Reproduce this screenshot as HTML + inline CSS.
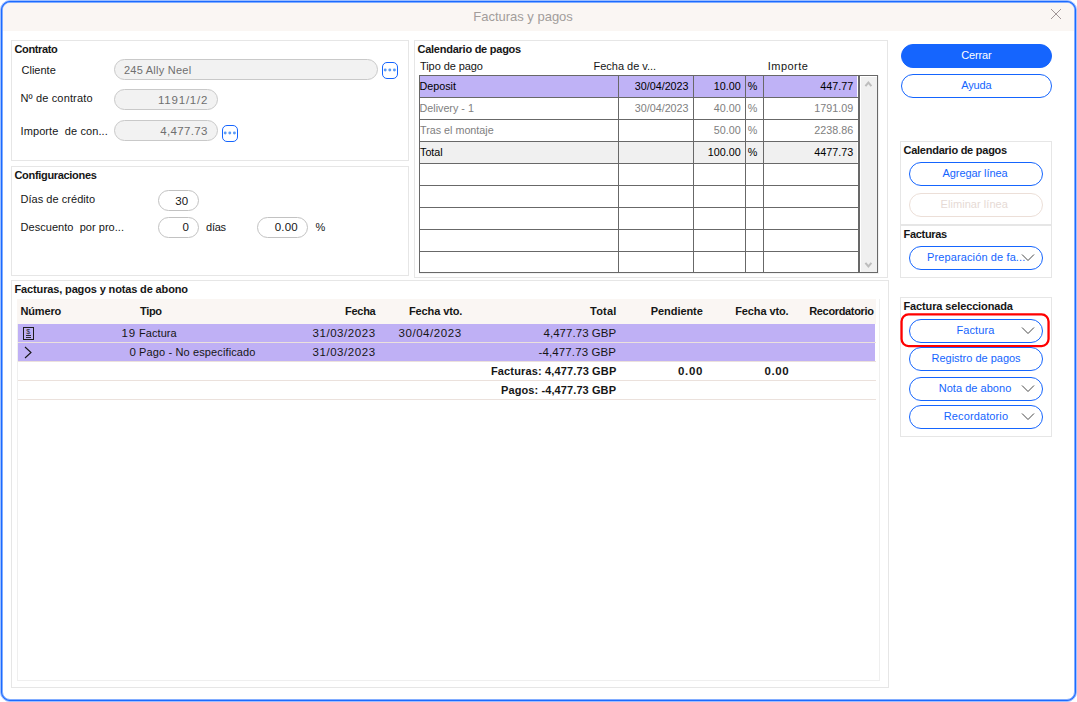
<!DOCTYPE html>
<html lang="es">
<head>
<meta charset="utf-8">
<title>Facturas y pagos</title>
<style>
html,body{margin:0;padding:0;background:#fff;}
body{width:1077px;height:702px;position:relative;overflow:hidden;font-family:"Liberation Sans",sans-serif;font-size:11px;color:#161616;}
.abs,.t,.g,.f,.b,.hl{position:absolute;box-sizing:border-box;}
.win{position:absolute;left:0;top:0;width:1077px;height:702px;box-sizing:border-box;border:1px solid #9dbdff;border-radius:10px;background:#9dbdff;}
.win2{position:absolute;left:0;top:0;right:0;bottom:0;border:1px solid #1b6bff;border-radius:9px;background:#1b6bff;}
.win3{position:absolute;left:0;top:0;right:0;bottom:0;border:1px solid #82adff;border-radius:8px;background:#fff;overflow:hidden;}
.titlebar{position:absolute;left:0;top:0;right:0;height:28px;background:#faf6f3;}
.t{white-space:pre;line-height:14px;font-size:11px;}
.bd{font-weight:bold;}
.g{border:1px solid #e6e6e6;background:#fff;}
.f{height:21px;border:1px solid #c2c2c2;border-radius:10.5px;background:#fff;}
.f.dis{background:#f2f2f2;border-color:#c9c9c9;}
.b{height:24px;border:1px solid #1565fe;border-radius:12px;background:#fff;}
.b.pri{background:#1565fe;}
.b.off{border-color:#ecdfd8;}
.dots{position:absolute;box-sizing:border-box;width:17px;height:17px;border:1px solid #1565fe;border-radius:5px;background:#fff;}
.dots i{position:absolute;top:6px;width:3px;height:3px;border-radius:50%;background:#78a9ff;}
.hl{border:2px solid #f00000;border-radius:7px;}
.line{position:absolute;background:#686868;}
.row{position:absolute;}
</style>
</head>
<body>
<div class="win"><div class="win2"><div class="win3"><div class="titlebar"></div></div></div></div>
<!-- close X -->
<svg class="abs" style="left:1050px;top:8px" width="12" height="12" viewBox="0 0 12 12"><path d="M1 1 L11 11 M11 1 L1 11" stroke="#968b8c" stroke-width="0.9" fill="none"/></svg>

<!-- groups -->
<div class="g" style="left:11px;top:40px;width:398px;height:121px"></div>
<div class="g" style="left:11px;top:166px;width:398px;height:110px"></div>
<div class="g" style="left:414px;top:40px;width:474px;height:238px"></div>
<div class="g" style="left:11px;top:280px;width:878px;height:408px"></div>
<div class="g" style="left:900px;top:141px;width:152px;height:84px"></div>
<div class="g" style="left:900px;top:225px;width:152px;height:53px"></div>
<div class="g" style="left:900px;top:297px;width:152px;height:140px"></div>

<!-- fields -->
<div class="f dis" style="left:114px;top:59px;width:264px"></div>
<div class="f dis" style="left:114px;top:89px;width:104px"></div>
<div class="f dis" style="left:114px;top:120px;width:104px"></div>
<svg class="abs" style="left:382px;top:62px" width="16" height="17" viewBox="0 0 16 17"><rect x="0.5" y="0.5" width="15" height="16" rx="4.5" ry="4.5" fill="#fff" stroke="#1565fe" stroke-width="1"/><circle cx="3.2" cy="8" r="1.45" fill="#5b9bf5"/><circle cx="7.8" cy="8" r="1.45" fill="#5b9bf5"/><circle cx="12.4" cy="8" r="1.45" fill="#5b9bf5"/></svg>
<svg class="abs" style="left:222px;top:125px" width="16" height="17" viewBox="0 0 16 17"><rect x="0.5" y="0.5" width="15" height="16" rx="4.5" ry="4.5" fill="#fff" stroke="#1565fe" stroke-width="1"/><circle cx="3.2" cy="8" r="1.45" fill="#5b9bf5"/><circle cx="7.8" cy="8" r="1.45" fill="#5b9bf5"/><circle cx="12.4" cy="8" r="1.45" fill="#5b9bf5"/></svg>
<div class="f" style="left:158px;top:190px;width:41px"></div>
<div class="f" style="left:158px;top:217px;width:41px"></div>
<div class="f" style="left:257px;top:217px;width:51px"></div>

<!-- payment calendar table -->
<div class="abs" style="left:419px;top:75px;width:460px;height:199px;border-right:1px solid #f2f2f2;border-bottom:1px solid #f2f2f2;box-sizing:border-box"></div>
<div class="abs" style="left:419px;top:75px;width:459px;height:198px;background:#f0f0f0;border:1px solid #686868;box-sizing:border-box"></div>
<div class="abs" style="left:420px;top:76px;width:438px;height:196px;background:#fff"></div>
<div class="abs" style="left:420px;top:76px;width:437px;height:21px;background:#bfb2f6"></div>
<div class="abs" style="left:420px;top:142px;width:437px;height:21px;background:#f0f0f0"></div>
<div class="line" style="left:420px;top:97px;width:438px;height:1px"></div>
<div class="line" style="left:420px;top:119px;width:438px;height:1px"></div>
<div class="line" style="left:420px;top:141px;width:438px;height:1px"></div>
<div class="line" style="left:420px;top:163px;width:438px;height:1px"></div>
<div class="line" style="left:420px;top:185px;width:438px;height:1px"></div>
<div class="line" style="left:420px;top:207px;width:438px;height:1px"></div>
<div class="line" style="left:420px;top:229px;width:438px;height:1px"></div>
<div class="line" style="left:420px;top:251px;width:438px;height:1px"></div>
<div class="line" style="left:618px;top:76px;width:1px;height:196px"></div>
<div class="line" style="left:693px;top:76px;width:1px;height:196px"></div>
<div class="line" style="left:745px;top:76px;width:1px;height:196px"></div>
<div class="line" style="left:763px;top:76px;width:1px;height:196px"></div>
<div class="line" style="left:858px;top:76px;width:2px;height:196px"></div>
<!-- scrollbar arrows -->
<div class="abs" style="left:860px;top:76px;width:17px;height:196px;border-left:1px solid #fff;border-top:1px solid #fff;box-sizing:border-box"></div>
<svg class="abs" style="left:863px;top:79px" width="11" height="10" viewBox="0 0 11 10"><path d="M2.4 7.2 L5.4 3.6 L8.4 7.2" stroke="#bdbdbd" stroke-width="2" fill="none"/></svg>
<svg class="abs" style="left:863px;top:260px" width="11" height="10" viewBox="0 0 11 10"><path d="M2.4 2.8 L5.4 6.4 L8.4 2.8" stroke="#bdbdbd" stroke-width="2" fill="none"/></svg>

<!-- invoices grid -->
<div class="abs" style="left:17px;top:299px;width:863px;height:382px;border:1px solid #efefef;border-top:none;box-sizing:border-box;background:#fff"></div>
<div class="abs" style="left:17px;top:299px;width:859px;height:25px;background:#faf6f3"></div>
<div class="abs" style="left:18px;top:324px;width:857px;height:18px;background:#bfb0f5"></div>
<div class="abs" style="left:18px;top:343px;width:857px;height:18px;background:#bfb0f5"></div>
<div class="abs" style="left:18px;top:342px;width:858px;height:1px;background:#ebe1dc"></div>
<div class="abs" style="left:18px;top:361px;width:858px;height:1px;background:#ebe1dc"></div>
<div class="abs" style="left:18px;top:380px;width:858px;height:1px;background:#ebe1dc"></div>
<div class="abs" style="left:18px;top:399px;width:858px;height:1px;background:#ebe1dc"></div>
<!-- row icons -->
<svg class="abs" style="left:23px;top:327px" width="11" height="13" viewBox="0 0 11 13"><rect x="0.5" y="0.5" width="10" height="12" fill="none" stroke="#1c1c1c" stroke-width="1"/><path d="M3 8.5 H8 M3 10.5 H8" stroke="#1c1c1c" stroke-width="0.9"/><text x="5.3" y="7.3" font-family="Liberation Sans, sans-serif" font-size="7" text-anchor="middle" fill="#1c1c1c">$</text></svg>
<svg class="abs" style="left:23px;top:346px" width="10" height="13" viewBox="0 0 10 13"><path d="M2 1 L8 6.5 L2 12" stroke="#161616" stroke-width="1.1" fill="none"/></svg>

<!-- buttons -->
<div class="b pri" style="left:901px;top:44px;width:151px"></div>
<div class="b" style="left:901px;top:74px;width:151px"></div>
<div class="b" style="left:909px;top:162px;width:134px"></div>
<div class="b off" style="left:909px;top:193px;width:134px"></div>
<div class="b" style="left:909px;top:246px;width:134px"></div>
<svg class="abs" style="left:899px;top:312px" width="153" height="38" viewBox="0 0 153 38"><rect x="2.55" y="2.45" width="147" height="31.6" rx="7" ry="7" fill="none" stroke="#ff0000" stroke-width="2.3"/></svg>
<div class="b" style="left:909px;top:319px;width:134px"></div>
<div class="b" style="left:909px;top:347px;width:134px"></div>
<div class="b" style="left:909px;top:377px;width:134px"></div>
<div class="b" style="left:909px;top:405px;width:134px"></div>
<svg class="abs" style="left:1020.5px;top:253px" width="14" height="9" viewBox="0 0 14 9"><path d="M1 1.5 L7 7.5 L13 1.5" stroke="#484848" stroke-width="1" fill="none"/></svg>
<svg class="abs" style="left:1020.5px;top:326px" width="14" height="9" viewBox="0 0 14 9"><path d="M1 1.5 L7 7.5 L13 1.5" stroke="#484848" stroke-width="1" fill="none"/></svg>
<svg class="abs" style="left:1020.5px;top:384px" width="14" height="9" viewBox="0 0 14 9"><path d="M1 1.5 L7 7.5 L13 1.5" stroke="#484848" stroke-width="1" fill="none"/></svg>
<svg class="abs" style="left:1020.5px;top:412px" width="14" height="9" viewBox="0 0 14 9"><path d="M1 1.5 L7 7.5 L13 1.5" stroke="#484848" stroke-width="1" fill="none"/></svg>

<span class="t" style="left:473.25px;top:10px;font-size:13px;letter-spacing:-0.01px;color:#a29d9b;">Facturas y pagos</span>
<span class="t bd" style="left:14.5px;top:42px;letter-spacing:-0.36px;">Contrato</span>
<span class="t" style="left:21.5px;top:63px;letter-spacing:0.01px;">Cliente</span>
<span class="t" style="left:20.5px;top:91px;letter-spacing:0.15px;">Nº de contrato</span>
<span class="t" style="left:20.5px;top:124px;letter-spacing:0.10px;">Importe  de con...</span>
<span class="t" style="left:124.0px;top:63px;letter-spacing:0.24px;color:#6f6f6f;">245 Ally Neel</span>
<span class="t" style="left:158.0px;top:93px;font-size:11.5px;letter-spacing:0.79px;color:#6f6f6f;">1191/1/2</span>
<span class="t" style="left:160.25px;top:124px;font-size:11.5px;letter-spacing:0.33px;color:#6f6f6f;">4,477.73</span>
<span class="t bd" style="left:14.5px;top:168px;letter-spacing:-0.32px;">Configuraciones</span>
<span class="t" style="left:20.5px;top:192px;letter-spacing:0.04px;">Días de crédito</span>
<span class="t" style="left:20.5px;top:220px;letter-spacing:0.04px;">Descuento  por pro...</span>
<span class="t" style="left:175.25px;top:194px;font-size:11.5px;">30</span>
<span class="t" style="left:182.5px;top:220px;font-size:11.5px;">0</span>
<span class="t" style="left:206.0px;top:220px;letter-spacing:-0.23px;">días</span>
<span class="t" style="left:274.75px;top:220px;font-size:11.5px;letter-spacing:0.18px;">0.00</span>
<span class="t" style="left:315.5px;top:220px;">%</span>
<span class="t bd" style="left:417.5px;top:42px;letter-spacing:-0.25px;">Calendario de pagos</span>
<span class="t" style="left:420.0px;top:59px;letter-spacing:-0.08px;">Tipo de pago</span>
<span class="t" style="left:593.5px;top:59px;letter-spacing:-0.01px;">Fecha de v...</span>
<span class="t" style="left:767.75px;top:59px;letter-spacing:0.48px;">Importe</span>
<span class="t" style="left:419.5px;top:79px;font-size:10.75px;color:#000000;">Deposit</span>
<span class="t" style="left:419.5px;top:101px;font-size:10.75px;color:#808080;">Delivery - 1</span>
<span class="t" style="left:420.0px;top:123px;font-size:10.75px;color:#808080;">Tras el montaje</span>
<span class="t" style="left:420.0px;top:145px;font-size:10.75px;color:#000000;">Total</span>
<span class="t" style="left:634.75px;top:79px;font-size:10.75px;color:#000000;">30/04/2023</span>
<span class="t" style="left:634.75px;top:101px;font-size:10.75px;color:#808080;">30/04/2023</span>
<span class="t" style="left:713.75px;top:79px;font-size:10.75px;color:#000000;">10.00</span>
<span class="t" style="left:713.75px;top:101px;font-size:10.75px;color:#808080;">40.00</span>
<span class="t" style="left:713.75px;top:123px;font-size:10.75px;color:#808080;">50.00</span>
<span class="t" style="left:707.75px;top:145px;font-size:10.75px;color:#000000;">100.00</span>
<span class="t" style="left:747.75px;top:79px;font-size:10.75px;color:#000000;">%</span>
<span class="t" style="left:747.75px;top:101px;font-size:10.75px;color:#808080;">%</span>
<span class="t" style="left:747.75px;top:123px;font-size:10.75px;color:#808080;">%</span>
<span class="t" style="left:747.75px;top:145px;font-size:10.75px;color:#000000;">%</span>
<span class="t" style="left:820.25px;top:79px;font-size:10.75px;color:#000000;">447.77</span>
<span class="t" style="left:814.25px;top:101px;font-size:10.75px;color:#808080;">1791.09</span>
<span class="t" style="left:814.25px;top:123px;font-size:10.75px;color:#808080;">2238.86</span>
<span class="t" style="left:814.25px;top:145px;font-size:10.75px;color:#000000;">4477.73</span>
<span class="t bd" style="left:14.5px;top:282px;letter-spacing:-0.14px;">Facturas, pagos y notas de abono</span>
<span class="t bd" style="left:20.5px;top:304px;letter-spacing:-0.17px;">Número</span>
<span class="t bd" style="left:140.0px;top:304px;letter-spacing:-0.35px;">Tipo</span>
<span class="t bd" style="left:345.0px;top:304px;letter-spacing:-0.27px;">Fecha</span>
<span class="t bd" style="left:409.0px;top:304px;letter-spacing:-0.11px;">Fecha vto.</span>
<span class="t bd" style="left:590.0px;top:304px;letter-spacing:0.23px;">Total</span>
<span class="t bd" style="left:650.75px;top:304px;letter-spacing:-0.06px;">Pendiente</span>
<span class="t bd" style="left:735.25px;top:304px;letter-spacing:-0.11px;">Fecha vto.</span>
<span class="t bd" style="left:809.25px;top:304px;letter-spacing:-0.35px;">Recordatorio</span>
<span class="t" style="left:121.5px;top:326px;font-size:11.5px;letter-spacing:0.83px;">19</span>
<span class="t" style="left:139.0px;top:326px;letter-spacing:0.07px;">Factura</span>
<span class="t" style="left:312.5px;top:326px;font-size:11.5px;letter-spacing:0.56px;">31/03/2023</span>
<span class="t" style="left:398.5px;top:326px;font-size:11.5px;letter-spacing:0.56px;">30/04/2023</span>
<span class="t" style="left:543.5px;top:326px;font-size:11.5px;letter-spacing:0.04px;">4,477.73 GBP</span>
<span class="t" style="left:129.5px;top:345px;font-size:11.5px;">0</span>
<span class="t" style="left:139.0px;top:345px;letter-spacing:0.13px;">Pago - No especificado</span>
<span class="t" style="left:312.5px;top:345px;font-size:11.5px;letter-spacing:0.56px;">31/03/2023</span>
<span class="t" style="left:538.5px;top:345px;font-size:11.5px;letter-spacing:0.12px;">-4,477.73 GBP</span>
<span class="t bd" style="left:491.0px;top:364px;letter-spacing:0.14px;">Facturas: 4,477.73 GBP</span>
<span class="t bd" style="left:678.0px;top:364px;font-size:11.5px;letter-spacing:0.65px;">0.00</span>
<span class="t bd" style="left:764.5px;top:364px;font-size:11.5px;letter-spacing:0.55px;">0.00</span>
<span class="t bd" style="left:501.0px;top:383px;letter-spacing:0.10px;">Pagos: -4,477.73 GBP</span>
<span class="t" style="left:961.25px;top:48px;letter-spacing:-0.13px;color:#ffffff;">Cerrar</span>
<span class="t" style="left:961.25px;top:78px;letter-spacing:-0.16px;color:#1565fe;">Ayuda</span>
<span class="t bd" style="left:903.5px;top:143px;letter-spacing:-0.25px;">Calendario de pagos</span>
<span class="t" style="left:942.5px;top:166px;letter-spacing:-0.08px;color:#1565fe;">Agregar línea</span>
<span class="t" style="left:940.5px;top:197px;letter-spacing:0.06px;color:#e6dad5;">Eliminar línea</span>
<span class="t bd" style="left:903.5px;top:227px;letter-spacing:-0.31px;">Facturas</span>
<span class="t" style="left:927.0px;top:250px;letter-spacing:0.12px;color:#1565fe;">Preparación de fa...</span>
<span class="t bd" style="left:903.5px;top:299px;letter-spacing:-0.13px;">Factura seleccionada</span>
<span class="t" style="left:956.5px;top:323px;letter-spacing:0.09px;color:#1565fe;">Factura</span>
<span class="t" style="left:931.5px;top:351px;letter-spacing:-0.01px;color:#1565fe;">Registro de pagos</span>
<span class="t" style="left:938.75px;top:381px;letter-spacing:0.03px;color:#1565fe;">Nota de abono</span>
<span class="t" style="left:943.75px;top:409px;letter-spacing:0.12px;color:#1565fe;">Recordatorio</span>
</body>
</html>
